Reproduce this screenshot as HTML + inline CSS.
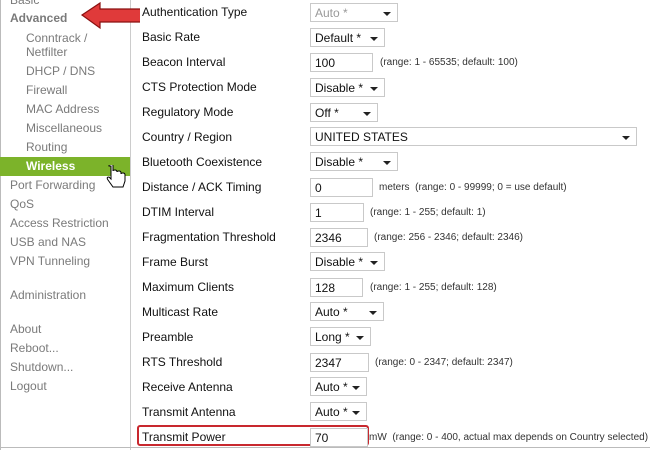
<!DOCTYPE html><html><head><style>
body{margin:0;width:650px;height:450px;overflow:hidden;background:#fff;font-family:"Liberation Sans",Arial,sans-serif;font-size:12px;position:relative}
.a{position:absolute;white-space:nowrap}
.s{color:#7a7a7a}
.l{left:142px;color:#111}
.c{position:absolute;left:310px;height:19px;border:1px solid #c9c9c9;background:#fff;box-sizing:border-box;font-size:12px;color:#111;padding:2px 0 0 4px}
.c.sel::after{content:"";position:absolute;right:6px;top:8px;border-left:4px solid transparent;border-right:4px solid transparent;border-top:4px solid #222}
.h{position:absolute;font-size:10px;color:#333;white-space:nowrap}
</style></head><body>
<div style="position:absolute;left:0;top:0;width:1px;height:450px;background:#bbb"></div>
<div style="position:absolute;left:130px;top:0;width:1px;height:450px;background:#ccc"></div>
<div style="position:absolute;left:0;top:447px;width:650px;height:1px;background:#bbb"></div>
<div style="position:absolute;left:0;top:157px;width:130px;height:19px;background:#7cb32a"></div>
<div class="a s" style="left:10px;top:-7px">Basic</div>
<div class="a s" style="left:10px;top:11px;font-weight:bold">Advanced</div>
<div class="a s" style="left:26px;top:31px">Conntrack /</div>
<div class="a s" style="left:26px;top:45px">Netfilter</div>
<div class="a s" style="left:26px;top:64px">DHCP / DNS</div>
<div class="a s" style="left:26px;top:83px">Firewall</div>
<div class="a s" style="left:26px;top:102px">MAC Address</div>
<div class="a s" style="left:26px;top:121px">Miscellaneous</div>
<div class="a s" style="left:26px;top:140px">Routing</div>
<div class="a" style="left:26px;top:159px;color:#fff;font-weight:bold">Wireless</div>
<div class="a s" style="left:10px;top:178px">Port Forwarding</div>
<div class="a s" style="left:10px;top:197px">QoS</div>
<div class="a s" style="left:10px;top:216px">Access Restriction</div>
<div class="a s" style="left:10px;top:235px">USB and NAS</div>
<div class="a s" style="left:10px;top:254px">VPN Tunneling</div>
<div class="a s" style="left:10px;top:288px">Administration</div>
<div class="a s" style="left:10px;top:322px">About</div>
<div class="a s" style="left:10px;top:341px">Reboot...</div>
<div class="a s" style="left:10px;top:360px">Shutdown...</div>
<div class="a s" style="left:10px;top:379px">Logout</div>
<svg style="position:absolute;left:106px;top:165px" width="22" height="26" viewBox="0 0 22 26"><path d="M5 1v13l-2-2q-3 0-1 3l5 7h10l2-6v-6q0-2-2-2t-2 1v-1q0-2-2-2t-2 1q0-2-2-2t-2 1v-5q0-2-2-2t-2 2z" fill="#fff" stroke="#000" stroke-width="1"/></svg>
<svg style="position:absolute;left:80px;top:0" width="60" height="32"><path d="M2 15L20 3V9H138V22H20V28Z" fill="#e03a3a" stroke="#8a1010" stroke-width="1.2"/></svg>

<div class="a l" style="top:5px">Authentication Type</div>
<div class="c sel" style="top:3px;width:88px;color:#999">Auto *</div>
<div class="a l" style="top:30px">Basic Rate</div>
<div class="c sel" style="top:28px;width:75px">Default *</div>
<div class="a l" style="top:55px">Beacon Interval</div>
<div class="c" style="top:53px;width:63px">100</div><div class="h" style="left:380px;top:57px">(range: 1 - 65535; default: 100)</div>
<div class="a l" style="top:80px">CTS Protection Mode</div>
<div class="c sel" style="top:78px;width:75px">Disable *</div>
<div class="a l" style="top:105px">Regulatory Mode</div>
<div class="c sel" style="top:103px;width:68px">Off *</div>
<div class="a l" style="top:130px">Country / Region</div>
<div class="c sel" style="top:127px;width:327px">UNITED STATES</div>
<div class="a l" style="top:155px">Bluetooth Coexistence</div>
<div class="c sel" style="top:152px;width:88px">Disable *</div>
<div class="a l" style="top:180px">Distance / ACK Timing</div>
<div class="c" style="top:178px;width:63px">0</div><div class="h" style="left:379px;top:182px">meters &nbsp;(range: 0 - 99999; 0 = use default)</div>
<div class="a l" style="top:205px">DTIM Interval</div>
<div class="c" style="top:203px;width:54px">1</div><div class="h" style="left:370px;top:207px">(range: 1 - 255; default: 1)</div>
<div class="a l" style="top:230px">Fragmentation Threshold</div>
<div class="c" style="top:228px;width:58px">2346</div><div class="h" style="left:374px;top:232px">(range: 256 - 2346; default: 2346)</div>
<div class="a l" style="top:255px">Frame Burst</div>
<div class="c sel" style="top:252px;width:75px">Disable *</div>
<div class="a l" style="top:280px">Maximum Clients</div>
<div class="c" style="top:278px;width:53px">128</div><div class="h" style="left:370px;top:282px">(range: 1 - 255; default: 128)</div>
<div class="a l" style="top:305px">Multicast Rate</div>
<div class="c sel" style="top:302px;width:74px">Auto *</div>
<div class="a l" style="top:330px">Preamble</div>
<div class="c sel" style="top:327px;width:61px">Long *</div>
<div class="a l" style="top:355px">RTS Threshold</div>
<div class="c" style="top:353px;width:59px">2347</div><div class="h" style="left:375px;top:357px">(range: 0 - 2347; default: 2347)</div>
<div class="a l" style="top:380px">Receive Antenna</div>
<div class="c sel" style="top:377px;width:57px">Auto *</div>
<div class="a l" style="top:405px">Transmit Antenna</div>
<div class="c sel" style="top:402px;width:57px">Auto *</div>
<div style="position:absolute;left:137px;top:425px;width:232px;height:21px;border:2px solid #c8282e;border-radius:3px;box-sizing:border-box"></div>
<div class="a l" style="top:430px">Transmit Power</div>
<div class="c" style="top:428px;width:58px">70</div><div class="h" style="left:369px;top:432px">mW &nbsp;(range: 0 - 400, actual max depends on Country selected)</div>
</body></html>
